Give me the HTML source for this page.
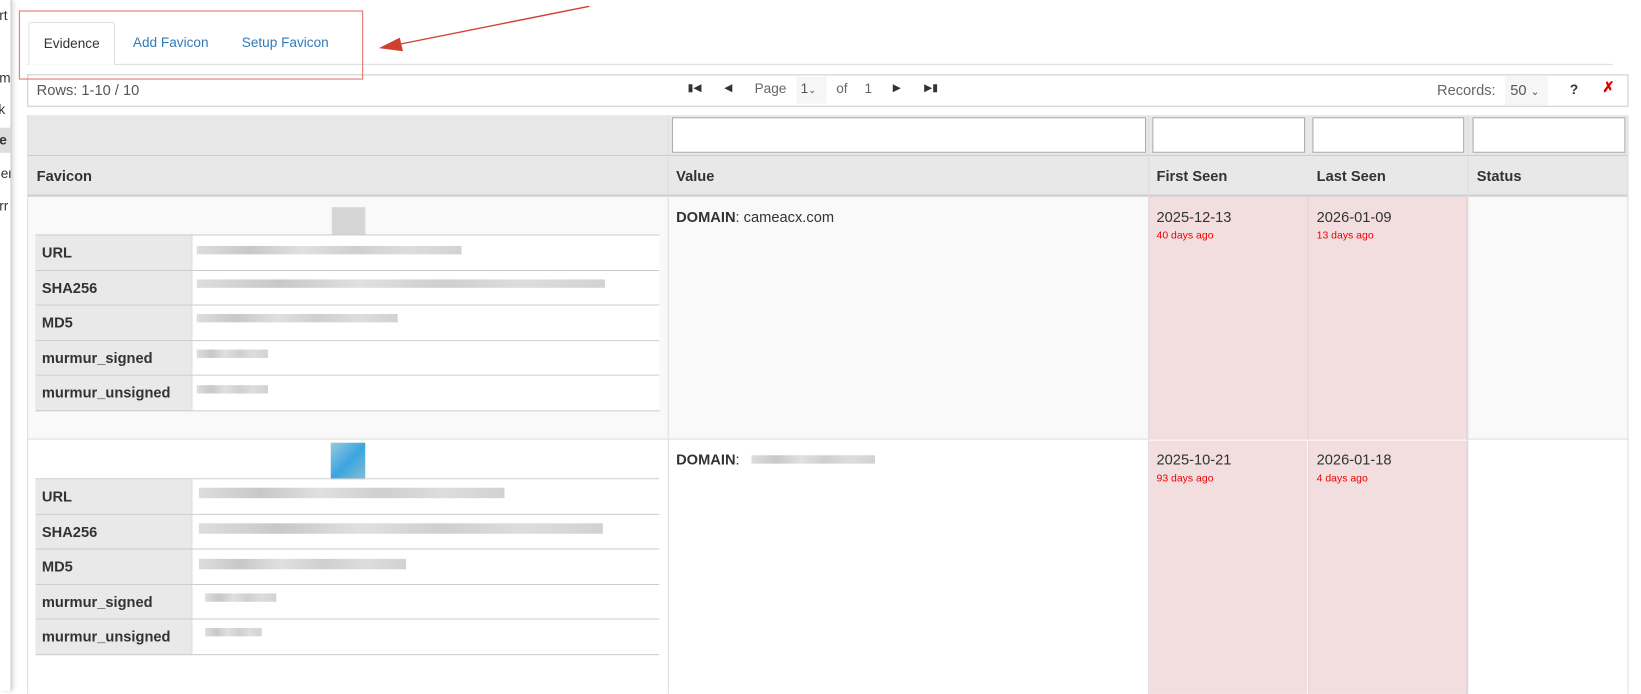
<!DOCTYPE html>
<html><head><meta charset="utf-8"><style>
*{box-sizing:border-box;margin:0;padding:0}
body{width:1641px;height:663px;overflow:hidden;background:#fff;font-family:"Liberation Sans",sans-serif;font-size:14px;color:#333;position:relative}
#w{position:absolute;left:0;top:0;width:1568px;height:634px;transform:scale(1.0466);transform-origin:0 0}
.a{position:absolute}
.side{left:0;top:0;width:11px;height:660px;background:#fff;border-right:1px solid #ccc;box-shadow:2px 0 4px rgba(0,0,0,.15);overflow:hidden;font-size:13px}
.side div{position:absolute;left:-8px;width:20px;white-space:nowrap}
.tab{top:21px;height:41px;line-height:40px;font-size:13px}
.blur{background:linear-gradient(90deg,#ddd 0,#c8c8c8 20%,#e0e0e0 40%,#cfcfcf 60%,#ddd 80%,#d2d2d2 100%);height:8px}
.lbl{left:34px;width:150px;background:#e9e9e9;border-right:1px solid #ddd;border-bottom:1px solid #ccc;font-weight:bold;font-size:14px;padding-left:6px}
.val{left:184px;width:446px;background:#fff;border-bottom:1px solid #ccc}
.inp{top:112px;height:34px;background:#fff;border:1px solid #aaa}
.th{top:160px;font-weight:bold;font-size:14px}
.pink{background:#f2dede}
.red{color:#e00;font-size:10px}
</style></head><body><div id="w">
<div class="a side"><div style="top:7px">art</div><div style="top:67px">em</div><div style="top:97px">ck</div><div style="top:122px;height:24px;background:#ddd;font-weight:bold;line-height:24px">ce</div><div style="top:158px">Ser</div><div style="top:189px">orr</div></div>

<div class="a" style="left:26px;top:61px;width:1515px;border-top:1px solid #ddd"></div>
<div class="a tab" style="left:27px;width:83px;border:1px solid #ddd;border-bottom:1px solid #fff;border-radius:3px 3px 0 0;background:#fff;text-align:center;color:#333">Evidence</div>
<div class="a tab" style="left:127px;color:#337ab7">Add Favicon</div>
<div class="a tab" style="left:231px;color:#337ab7">Setup Favicon</div>

<div class="a" style="left:26px;top:71px;width:1530px;height:31px;border:1px solid #ccc;background:#fff"></div>
<div class="a" style="left:35px;top:78px;font-size:14px;color:#555">Rows: 1-10 / 10</div>
<div class="a" style="left:657px;top:77px;font-size:13px;color:#333">
<span style="position:absolute;left:0;top:2px;font-size:10px">&#9646;&#9664;</span>
<span style="position:absolute;left:35px;top:2px;font-size:10px">&#9664;</span>
<span style="position:absolute;left:64px;top:0;color:#666">Page</span>
<span style="position:absolute;left:104px;top:-4px;width:29px;height:26px;background:#f6f6f6;padding:4px 0 0 4px;color:#555">1<span style="font-size:9px">&#8964;</span></span>
<span style="position:absolute;left:142px;color:#666">of</span>
<span style="position:absolute;left:169px;color:#666">1</span>
<span style="position:absolute;left:196px;top:2px;font-size:10px">&#9654;</span>
<span style="position:absolute;left:226px;top:2px;font-size:10px">&#9654;&#9646;</span>
</div>
<div class="a" style="left:1373px;top:78px;color:#666;font-size:14px">Records:</div>
<div class="a" style="left:1438px;top:72px;width:41px;height:29px;background:#f6f6f6;padding:6px 0 0 5px;color:#555">50 <span style="font-size:10px">&#8964;</span></div>
<div class="a" style="left:1500px;top:78px;font-weight:bold;font-size:13px">?</div>
<div class="a" style="left:1531px;top:75px;font-size:14px;color:#d00;font-weight:bold">&#10007;</div>

<div class="a" style="left:26px;top:110px;width:1529px;height:78px;background:#e8e8e8;border-bottom:2px solid #ccc"></div>
<div class="a" style="left:26px;top:148px;width:1529px;border-top:1px solid #ccc"></div>
<div class="a inp" style="left:642px;width:453px"></div>
<div class="a inp" style="left:1101px;width:146px"></div>
<div class="a inp" style="left:1254px;width:145px"></div>
<div class="a inp" style="left:1407px;width:146px"></div>
<div class="a th" style="left:35px">Favicon</div>
<div class="a th" style="left:646px">Value</div>
<div class="a th" style="left:1105px">First Seen</div>
<div class="a th" style="left:1258px">Last Seen</div>
<div class="a th" style="left:1411px">Status</div>

<div class="a" style="left:26px;top:188px;width:1529px;height:232px;background:#f9f9f9;border-bottom:1px solid #ddd"></div>
<div class="a pink" style="left:1097px;top:188px;width:152px;height:232px"></div>
<div class="a pink" style="left:1249px;top:188px;width:153px;height:232px;border-left:1px solid #e4d0d0;border-right:1px solid #e4d0d0"></div>
<div class="a" style="left:638px;top:110px;height:553px;border-left:1px solid #ddd"></div>
<div class="a" style="left:1097px;top:110px;height:553px;border-left:1px solid #ddd"></div>
<div class="a" style="left:1402px;top:110px;height:553px;border-left:1px solid #ddd"></div>
<div class="a" style="left:317px;top:198px;width:32px;height:28px;background:#d6d6d6"></div>
<div class="a" style="left:34px;top:224px;width:596px;height:169px;border-top:1px solid #ccc;border-left:1px solid #ccc"></div>
<div class="a lbl" style="top:225px;height:34px;line-height:33px">URL</div>
<div class="a lbl" style="top:259px;height:33px;line-height:32px">SHA256</div>
<div class="a lbl" style="top:292px;height:34px;line-height:33px">MD5</div>
<div class="a lbl" style="top:326px;height:33px;line-height:32px">murmur_signed</div>
<div class="a lbl" style="top:359px;height:34px;line-height:33px">murmur_unsigned</div>
<div class="a val" style="top:225px;height:34px"></div><div class="a val" style="top:259px;height:33px"></div><div class="a val" style="top:292px;height:34px"></div><div class="a val" style="top:326px;height:33px"></div><div class="a val" style="top:359px;height:34px"></div>
<div class="a blur" style="left:188px;top:235px;width:253px"></div>
<div class="a blur" style="left:188px;top:267px;width:390px"></div>
<div class="a blur" style="left:188px;top:300px;width:192px"></div>
<div class="a blur" style="left:188px;top:334px;width:68px"></div>
<div class="a blur" style="left:188px;top:368px;width:68px"></div>
<div class="a" style="left:646px;top:199px;font-size:14px"><b>DOMAIN</b>: cameacx.com</div>
<div class="a" style="left:1105px;top:199px;font-size:14px">2025-12-13</div>
<div class="a red" style="left:1105px;top:220px">40 days ago</div>
<div class="a" style="left:1258px;top:199px;font-size:14px">2026-01-09</div>
<div class="a red" style="left:1258px;top:220px">13 days ago</div>

<div class="a pink" style="left:1098px;top:421px;width:151px;height:242px"></div>
<div class="a pink" style="left:1250px;top:421px;width:152px;height:242px;border-left:1px solid #e4d0d0;border-right:1px solid #e4d0d0"></div>
<div class="a" style="left:316px;top:423px;width:33px;height:38px;background:linear-gradient(135deg,#9cc7dd,#3aa5e0 50%,#8fbfd6)"></div>
<div class="a" style="left:34px;top:457px;width:596px;height:169px;border-top:1px solid #ccc;border-left:1px solid #ccc"></div>
<div class="a lbl" style="top:458px;height:34px;line-height:33px">URL</div>
<div class="a lbl" style="top:492px;height:33px;line-height:32px">SHA256</div>
<div class="a lbl" style="top:525px;height:34px;line-height:33px">MD5</div>
<div class="a lbl" style="top:559px;height:33px;line-height:32px">murmur_signed</div>
<div class="a lbl" style="top:592px;height:34px;line-height:33px">murmur_unsigned</div>
<div class="a val" style="top:458px;height:34px"></div><div class="a val" style="top:492px;height:33px"></div><div class="a val" style="top:525px;height:34px"></div><div class="a val" style="top:559px;height:33px"></div><div class="a val" style="top:592px;height:34px"></div>
<div class="a blur" style="left:190px;top:466px;width:292px;height:10px"></div>
<div class="a blur" style="left:190px;top:500px;width:386px;height:10px"></div>
<div class="a blur" style="left:190px;top:534px;width:198px;height:10px"></div>
<div class="a blur" style="left:196px;top:567px;width:68px"></div>
<div class="a blur" style="left:196px;top:600px;width:54px"></div>
<div class="a" style="left:646px;top:431px;font-size:14px"><b>DOMAIN</b>:</div>
<div class="a blur" style="left:718px;top:435px;width:118px"></div>
<div class="a" style="left:1105px;top:431px;font-size:14px">2025-10-21</div>
<div class="a red" style="left:1105px;top:452px">93 days ago</div>
<div class="a" style="left:1258px;top:431px;font-size:14px">2026-01-18</div>
<div class="a red" style="left:1258px;top:452px">4 days ago</div>
<div class="a" style="left:26px;top:110px;height:553px;border-left:1px solid #ddd"></div>
<div class="a" style="left:1555px;top:110px;height:553px;border-left:1px solid #ddd"></div>

<div class="a" style="left:18px;top:10px;width:329px;height:66px;border:1.5px solid #e07070"></div>
<svg class="a" style="left:0;top:0" width="1568" height="634"><line x1="563" y1="6" x2="378" y2="43" stroke="#d04030" stroke-width="1.3"/><polygon points="362,46 382,36 385,49" fill="#d04030"/></svg>
</div></body></html>
